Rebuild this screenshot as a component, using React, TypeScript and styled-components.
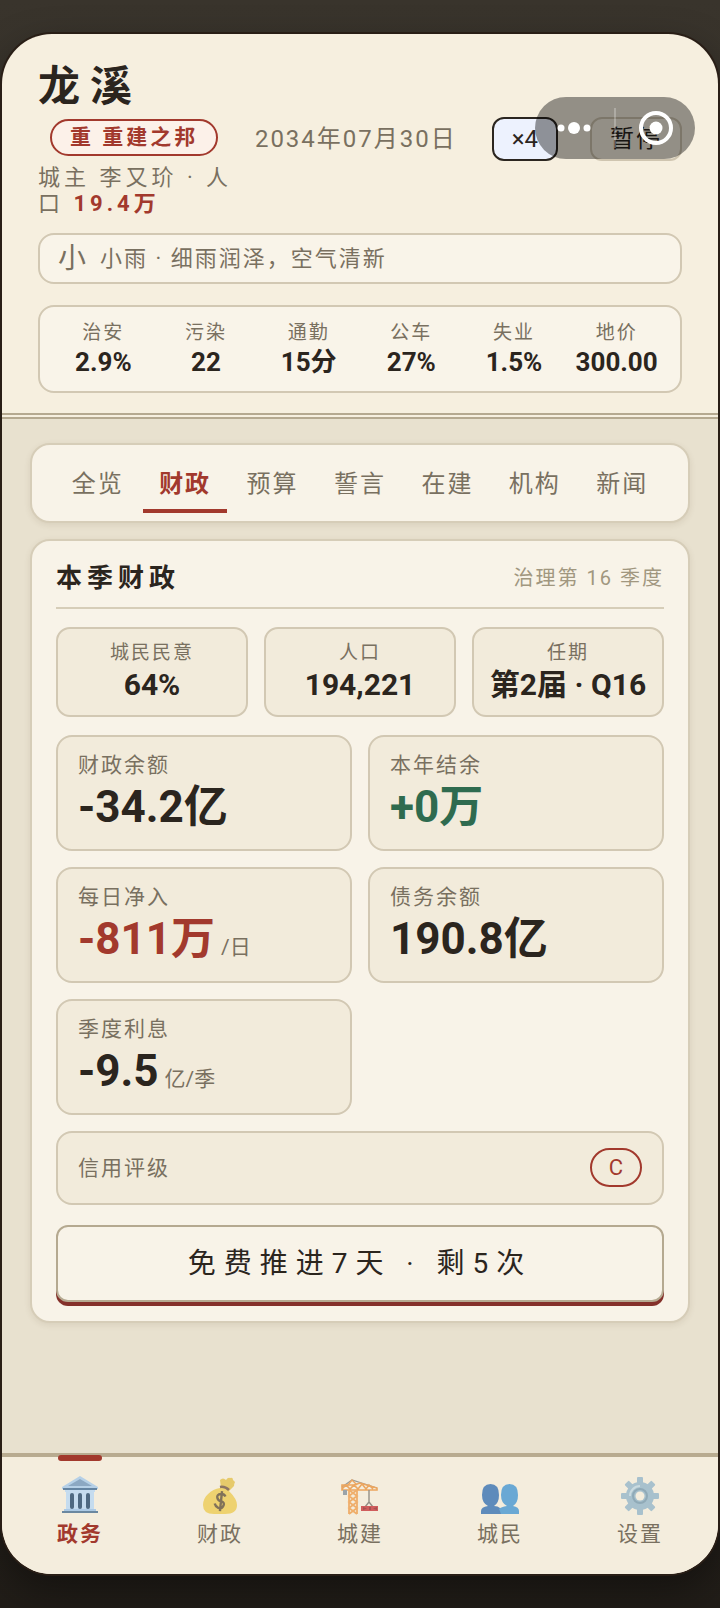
import React, { useState } from "react";
import styled, { createGlobalStyle } from "styled-components";

const GlobalStyle = createGlobalStyle`
  * {
    box-sizing: border-box;
  }
  body {
    margin: 0;
    min-height: 100vh;
    background: linear-gradient(180deg, #39342c 0%, #211d18 100%);
    font-family: Roboto, "Noto Sans CJK SC", sans-serif;
    color: #2b251e;
  }
  button {
    font-family: inherit;
    color: inherit;
    cursor: pointer;
  }
`;

const Page = styled.div`
  display: flex;
  flex-direction: column;
  min-height: 100vh;
  padding: 34px 2px;
`;

const Phone = styled.div`
  position: relative;
  flex: 1;
  display: flex;
  flex-direction: column;
  overflow: hidden;
  border-radius: 50px;
  background: #f6efdf;
  box-shadow: 0 0 0 2px #291e16, 0 16px 40px rgba(0, 0, 0, 0.4);
`;

const Header = styled.header`
  padding: 28px 36px 20px;
  border-bottom: 6px double #b5a990;
`;

const CityName = styled.h1`
  margin: 0;
  font-size: 42px;
  line-height: 50px;
  letter-spacing: 10px;
  font-weight: 700;
`;

const HeaderRow = styled.div`
  display: flex;
  justify-content: space-between;
  align-items: flex-start;
  padding-top: 5px;
`;

const Identity = styled.div`
  width: 196px;
  padding-top: 2px;
  font-size: 22px;
  line-height: 26px;
  letter-spacing: 4px;
  color: #797060;
`;

const Badge = styled.span`
  display: inline-block;
  margin: 0 0 9px 12px;
  padding: 0 18px;
  border: 2px solid #a2392d;
  border-radius: 20px;
  background: #fcf1e9;
  color: #a2392d;
  font-size: 21px;
  line-height: 33px;
  letter-spacing: 3px;
  font-weight: 700;
  white-space: nowrap;
`;

const Population = styled.strong`
  color: #a2392d;
`;

const GameDate = styled.time`
  padding: 6px 0;
  margin-right: 14px;
  font-size: 24px;
  line-height: 32px;
  letter-spacing: 2px;
  color: #797060;
`;

const SpeedGroup = styled.div`
  display: flex;
  gap: 32px;
`;

const SpeedButton = styled.button<{ $active?: boolean }>`
  height: 44px;
  padding: 0 18px;
  border: 2px solid ${(p) => (p.$active ? "#2b2620" : "#cfc5b0")};
  border-radius: 12px;
  background: ${(p) => (p.$active ? "#edf2fe" : "transparent")};
  font-size: 24px;
  line-height: 40px;
  letter-spacing: ${(p) => (p.$active ? 0 : 2)}px;
`;

const Capsule = styled.div`
  position: absolute;
  top: 63px;
  right: 23px;
  display: flex;
  width: 160px;
  height: 62px;
  border-radius: 31px;
  background: rgba(0, 0, 0, 0.4);
`;

const Panel = styled.div`
  border: 2px solid #d2c8b3;
  border-radius: 16px;
  background: #f9f4e9;
`;

const Weather = styled(Panel)`
  display: flex;
  align-items: center;
  gap: 14px;
  margin-top: 16px;
  padding: 0 18px;
  font-size: 22px;
  line-height: 47px;
  letter-spacing: 2px;
  color: #797060;
`;

const WeatherIcon = styled.span`
  font-size: 28px;
  letter-spacing: 0;
`;

const Indicators = styled(Panel)`
  display: grid;
  grid-template-columns: repeat(6, 1fr);
  margin-top: 21px;
  padding: 12px 12px 14px;
`;

const Figure = styled.div`
  display: flex;
  flex-direction: column;
  align-items: center;
  white-space: nowrap;
`;

const SmallLabel = styled.span`
  font-size: 19px;
  line-height: 28px;
  letter-spacing: 2px;
  color: #797060;
`;

const FigureValue = styled.strong<{ $large?: boolean }>`
  font-size: ${(p) => (p.$large ? 30 : 26)}px;
  line-height: ${(p) => (p.$large ? 36 : 30)}px;
  font-weight: 700;
`;

const Content = styled.main`
  flex: 1;
  display: flex;
  flex-direction: column;
  gap: 16px;
  padding: 24px 28px;
  background: #e8e1cf;
`;

const Tabs = styled.nav`
  display: flex;
  gap: 4px;
  padding: 8px 24px;
  border: 2px solid #d6cdb8;
  border-radius: 20px;
  background: #f8f3e8;
  box-shadow: 0 2px 6px rgba(80, 60, 30, 0.1);
`;

const Tab = styled.button<{ $active: boolean }>`
  flex: 1;
  padding: 14px 0 8px;
  border: 0;
  border-bottom: 4px solid ${(p) => (p.$active ? "#a2392d" : "transparent")};
  background: none;
  color: ${(p) => (p.$active ? "#a2392d" : "#797060")};
  font-size: 24px;
  line-height: 34px;
  letter-spacing: 2px;
  font-weight: ${(p) => (p.$active ? 700 : 400)};
`;

const Card = styled.section`
  padding: 18px 24px 19px;
  border: 2px solid #d6cdb8;
  border-radius: 20px;
  background: #f8f3e8;
  box-shadow: 0 2px 6px rgba(80, 60, 30, 0.1);
`;

const CardHead = styled.div`
  display: flex;
  justify-content: space-between;
  align-items: center;
  padding-bottom: 10px;
  border-bottom: 2px solid #d6cdb8;
`;

const CardTitle = styled.h2`
  margin: 0;
  font-size: 26px;
  line-height: 38px;
  letter-spacing: 5px;
  font-weight: 700;
`;

const Quarter = styled.span`
  font-size: 20px;
  line-height: 36px;
  letter-spacing: 2px;
  color: #a1977f;
`;

const SummaryGrid = styled.div`
  display: grid;
  grid-template-columns: repeat(3, 1fr);
  gap: 16px;
  margin-top: 18px;
`;

const SummaryBox = styled(Figure)`
  padding: 10px 0 12px;
  border: 2px solid #d2c8b3;
  border-radius: 14px;
  background: #f2ebdb;
`;

const MoneyGrid = styled.div`
  display: grid;
  grid-template-columns: repeat(2, 1fr);
  gap: 16px;
  margin-top: 18px;
`;

const MoneyBox = styled.div`
  display: flex;
  flex-direction: column;
  padding: 14px 20px;
  border: 2px solid #d2c8b3;
  border-radius: 16px;
  background: #f2ebdb;
`;

const MoneyLabel = styled.span`
  font-size: 21px;
  line-height: 28px;
  letter-spacing: 2px;
  color: #797060;
`;

const MoneyValue = styled.strong<{ $color?: string }>`
  font-size: 44px;
  line-height: 56px;
  font-weight: 700;
  color: ${(p) => p.$color || "#2b251e"};
`;

const Unit = styled.small`
  margin-left: 6px;
  font-size: 21px;
  line-height: 1;
  font-weight: 400;
  color: #797060;
`;

const CreditRow = styled.div`
  display: flex;
  justify-content: space-between;
  align-items: center;
  margin-top: 16px;
  padding: 15px 20px 16px;
  border: 2px solid #d2c8b3;
  border-radius: 16px;
  background: #f2ebdb;
`;

const Rating = styled.span`
  padding: 0 17px;
  border: 2px solid #a2392d;
  border-radius: 20px;
  color: #a2392d;
  font-size: 22px;
  line-height: 35px;
`;

const AdvanceButton = styled.button`
  display: block;
  width: 100%;
  margin-top: 20px;
  padding: 0;
  border: 2px solid #b5a990;
  border-radius: 12px;
  background: #f8f3e8;
  box-shadow: 0 4px 0 #84302a;
  font-size: 28px;
  line-height: 73px;
  letter-spacing: 8px;
`;

const BottomNav = styled.nav`
  display: flex;
  padding: 0 8px 24px;
  border-top: 4px solid #b8ab90;
  background: #f4eddd;
`;

const NavItem = styled.button<{ $active: boolean }>`
  position: relative;
  flex: 1;
  display: flex;
  flex-direction: column;
  align-items: center;
  gap: 3px;
  padding: 18px 0 0;
  border: 0;
  background: none;
  color: ${(p) => (p.$active ? "#a2392d" : "#797060")};
  font-size: 21px;
  line-height: 32px;
  letter-spacing: 2px;
  font-weight: ${(p) => (p.$active ? 700 : 400)};

  svg {
    opacity: ${(p) => (p.$active ? 0.95 : 0.75)};
  }

  &::before {
    content: "";
    display: ${(p) => (p.$active ? "block" : "none")};
    position: absolute;
    top: -2px;
    left: 50%;
    width: 44px;
    height: 6px;
    border-radius: 3px;
    background: #a2392d;
    transform: translateX(-50%);
  }
`;

const BankIcon = () => (
  <svg width="40" height="40" viewBox="0 0 40 40">
    <path d="M20 1 2 12v2h36v-2Z" fill="#b3cfe8" />
    <path d="M20 4 8 11h24Z" fill="#87a5c2" />
    <path d="M3 13h34v2H3Z" fill="#5d7f9f" />
    <path d="M5 15h30v2H5Z" fill="#c3dcf0" />
    <path d="M6 17h28v18H6Z" fill="#c3dcf0" />
    <rect x="10" y="18" width="4" height="16" rx="2" fill="#46627d" />
    <rect x="18" y="18" width="4" height="16" rx="2" fill="#46627d" />
    <rect x="26" y="18" width="4" height="16" rx="2" fill="#46627d" />
    <path d="M4 34h32v2H4Z" fill="#a9c9e6" />
    <path d="M2 36h36v2H2Z" fill="#64839d" />
  </svg>
);

const MoneyIcon = () => (
  <svg width="40" height="40" viewBox="0 0 40 40">
    <path d="M21 13 20 5q3-3 6 0 2-3 4-2 3-1 3 2l2 2q-1 2-1 4l-5 5Z" fill="#e2bf45" />
    <path d="M20 13q6-1 9 3 8 8 8 14 0 9-12 9H14Q3 39 3 30c0-8 8-16 17-17Z" fill="#ecc94c" />
    <path d="M20 12q5-1 9 3" stroke="#6b4d3a" strokeWidth="2.5" fill="none" />
    <path
      d="M25 21q-2-3-5-2-4 1-3 4t4 3q4 1 3 4-1 4-5 3-3-1-4-4M21 16v20"
      stroke="#5b4a2e"
      strokeWidth="2.4"
      fill="none"
      transform="rotate(6 20 26)"
    />
  </svg>
);

const CraneIcon = () => (
  <svg width="40" height="40" viewBox="0 0 40 40" fill="none">
    <path d="M2 12 12 5l25 8" stroke="#7c7f80" strokeWidth="1.2" />
    <path
      d="M2 10h12l6-2 17 5v2H2ZM2 14l4-4 4 4 4-4 4 4 4-5 4 5 3-4 4 4"
      stroke="#ea8f35"
      strokeWidth="1.6"
    />
    <path
      d="M9 15v24M17 15v24M9 15l8 6-8 6 8 6-8 6M17 15l-8 6 8 6-8 6 8 6"
      stroke="#ee9a45"
      strokeWidth="1.8"
    />
    <path d="m8 10 4-5 5 5" stroke="#ea8f35" strokeWidth="1.4" />
    <path d="M3 15h4v5H3Z" fill="#7c8b98" />
    <path d="M29 15v12M29 27l-4 5M29 27l4 5" stroke="#75706a" strokeWidth="1.4" />
    <path d="M21 31h17v5H21Z" fill="#c42d33" />
    <path d="m23 32 4 1.500-4 1.500ZM29 32h2v3h-2ZM37 32l-4 1.500 4 1.500Z" fill="#8e1d24" />
  </svg>
);

const PeopleIcon = () => (
  <svg width="40" height="40" viewBox="0 0 40 40">
    <path d="M1 39v-3q0-4 7-5-6-3-6-11Q2 9 10.500 9T19 20q0 8-5 11 8 0 8 8Z" fill="#2d6bb0" />
    <path d="M21 39q-1-3-2-5 2-2 8-3-6-3-6-11Q21 9 29.500 9T38 20q0 8-5 11 6 1 6 5v3Z" fill="#3b92d2" />
  </svg>
);

const GearIcon = () => (
  <svg width="40" height="40" viewBox="0 0 40 40">
    <g fill="#8fb3c8">
      <circle cx="20" cy="21" r="14" />
      {[0, 45, 90, 135].map((angle) => (
        <rect key={angle} x="17" y="2" width="6" height="38" rx="1" transform={`rotate(${angle} 20 21)`} />
      ))}
    </g>
    <circle cx="20" cy="21" r="7" fill="none" stroke="#6f94ab" strokeWidth="2" />
    <path d="M10 21a10 10 0 0 1 10-10" fill="none" stroke="#bcd5e2" strokeWidth="2" />
    <circle cx="20" cy="21" r="4.500" fill="#f4eddd" />
  </svg>
);

const indicators = [
  ["治安", "2.9%"],
  ["污染", "22"],
  ["通勤", "15分"],
  ["公车", "27%"],
  ["失业", "1.5%"],
  ["地价", "300.00"],
];

const tabs = ["全览", "财政", "预算", "誓言", "在建", "机构", "新闻"];

const summary = [
  ["城民民意", "64%"],
  ["人口", "194,221"],
  ["任期", "第2届 · Q16"],
];

const money = [
  { label: "财政余额", value: "-34.2亿" },
  { label: "本年结余", value: "+0万", color: "#2f6b4f" },
  { label: "每日净入", value: "-811万", unit: "/日", color: "#a2392d" },
  { label: "债务余额", value: "190.8亿" },
  { label: "季度利息", value: "-9.5", unit: "亿/季" },
];

const navItems = [
  { label: "政务", Icon: BankIcon },
  { label: "财政", Icon: MoneyIcon },
  { label: "城建", Icon: CraneIcon },
  { label: "城民", Icon: PeopleIcon },
  { label: "设置", Icon: GearIcon },
];

const App: React.FC = () => {
  const [tab, setTab] = useState("财政");
  const [section, setSection] = useState("政务");

  return (
    <>
      <GlobalStyle />
      <Page>
        <Phone>
          <Header>
            <CityName>龙溪</CityName>
            <HeaderRow>
              <Identity>
                <Badge>重 重建之邦</Badge>
                <div>
                  城主 李又玠 · 人口 <Population>19.4万</Population>
                </div>
              </Identity>
              <GameDate dateTime="2034-07-30">2034年07月30日</GameDate>
              <SpeedGroup>
                <SpeedButton $active>×4</SpeedButton>
                <SpeedButton>暂停</SpeedButton>
              </SpeedGroup>
            </HeaderRow>
            <Weather>
              <WeatherIcon>小</WeatherIcon>
              <span>小雨 · 细雨润泽，空气清新</span>
            </Weather>
            <Indicators>
              {indicators.map(([label, value]) => (
                <Figure key={label}>
                  <SmallLabel>{label}</SmallLabel>
                  <FigureValue>{value}</FigureValue>
                </Figure>
              ))}
            </Indicators>
          </Header>

          <Content>
            <Tabs>
              {tabs.map((name) => (
                <Tab key={name} $active={name === tab} onClick={() => setTab(name)}>
                  {name}
                </Tab>
              ))}
            </Tabs>

            <Card>
              <CardHead>
                <CardTitle>本季财政</CardTitle>
                <Quarter>治理第 16 季度</Quarter>
              </CardHead>
              <SummaryGrid>
                {summary.map(([label, value]) => (
                  <SummaryBox key={label}>
                    <SmallLabel>{label}</SmallLabel>
                    <FigureValue $large>{value}</FigureValue>
                  </SummaryBox>
                ))}
              </SummaryGrid>
              <MoneyGrid>
                {money.map((item) => (
                  <MoneyBox key={item.label}>
                    <MoneyLabel>{item.label}</MoneyLabel>
                    <MoneyValue $color={item.color}>
                      {item.value}
                      {item.unit && <Unit>{item.unit}</Unit>}
                    </MoneyValue>
                  </MoneyBox>
                ))}
              </MoneyGrid>
              <CreditRow>
                <MoneyLabel>信用评级</MoneyLabel>
                <Rating>C</Rating>
              </CreditRow>
              <AdvanceButton>免费推进7天 · 剩5次</AdvanceButton>
            </Card>
          </Content>

          <BottomNav>
            {navItems.map(({ label, Icon }) => (
              <NavItem key={label} $active={label === section} onClick={() => setSection(label)}>
                <Icon />
                {label}
              </NavItem>
            ))}
          </BottomNav>

          <Capsule>
            <svg width="160" height="62" viewBox="0 0 160 62">
              <g fill="#fff">
                <circle cx="26" cy="31" r="3.500" />
                <circle cx="39" cy="31" r="6" />
                <circle cx="52" cy="31" r="3.500" />
                <circle cx="121" cy="31" r="6.500" />
              </g>
              <path d="M80 11v40" stroke="#fff" strokeOpacity="0.25" strokeWidth="2" />
              <circle cx="121" cy="31" r="15" fill="none" stroke="#fff" strokeWidth="4" />
            </svg>
          </Capsule>
        </Phone>
      </Page>
    </>
  );
};

export default App;
